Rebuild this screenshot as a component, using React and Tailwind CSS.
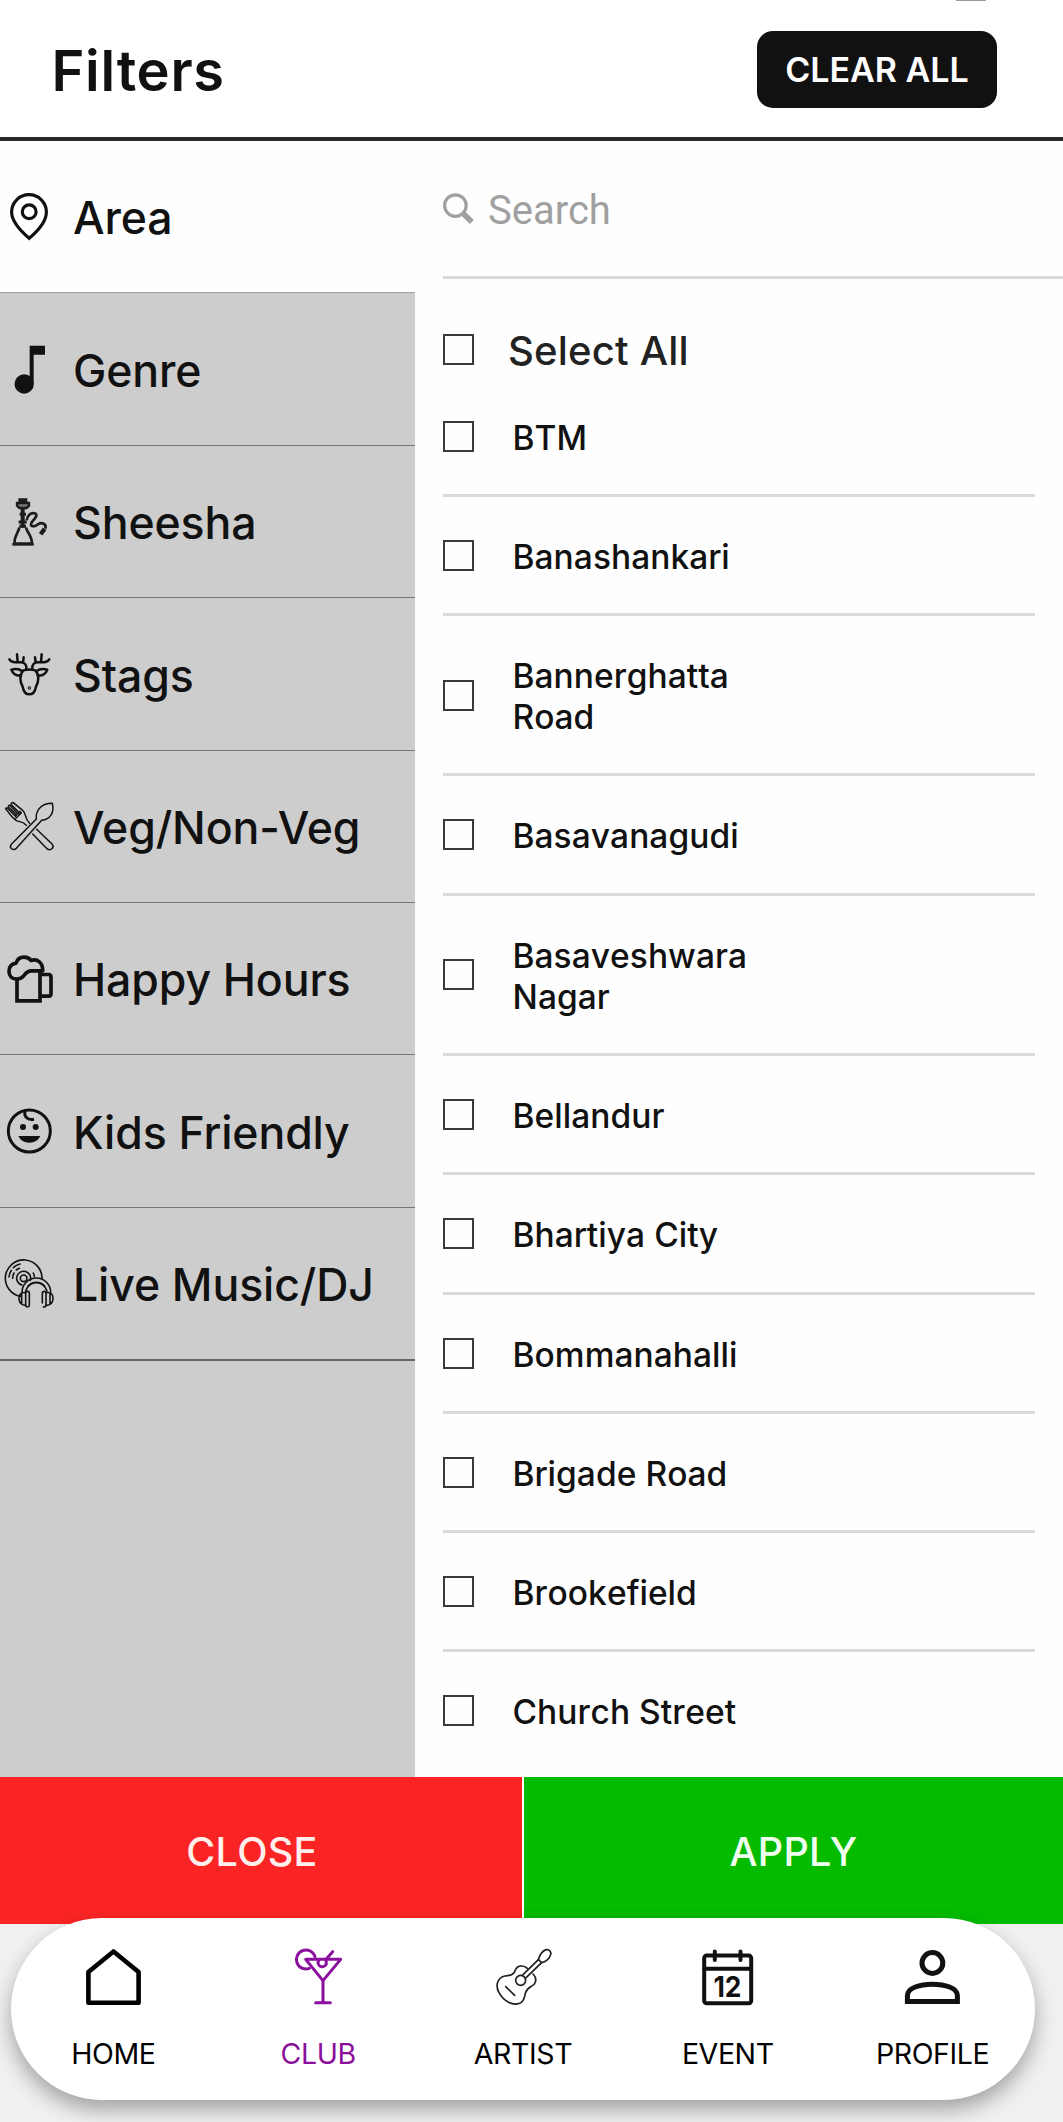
const categories = [
  { label: 'Area', Icon: PinIcon, active: true },
  { label: 'Genre', Icon: NoteIcon },
  { label: 'Sheesha', Icon: HookahIcon },
  { label: 'Stags', Icon: StagIcon },
  { label: 'Veg/Non-Veg', Icon: CutleryIcon },
  { label: 'Happy Hours', Icon: BeerIcon },
  { label: 'Kids Friendly', Icon: BabyIcon },
  { label: 'Live Music/DJ', Icon: DiscIcon },
];

const areas = [
  'BTM',
  'Banashankari',
  'Bannerghatta Road',
  'Basavanagudi',
  'Basaveshwara Nagar',
  'Bellandur',
  'Bhartiya City',
  'Bommanahalli',
  'Brigade Road',
  'Brookefield',
  'Church Street',
];

const tabs = [
  { label: 'HOME', Icon: HomeIcon },
  { label: 'CLUB', Icon: CocktailIcon, active: true },
  { label: 'ARTIST', Icon: GuitarIcon },
  { label: 'EVENT', Icon: CalendarIcon },
  { label: 'PROFILE', Icon: ProfileIcon },
];

const side = 'h-12 w-12 shrink-0 overflow-visible';
const nav = 'h-14 w-14 overflow-visible';

function PinIcon() {
  return (
    <svg viewBox="0 0 48 48" className={side} fill="none" stroke="currentColor" strokeWidth="3.2">
      <path d="M24.2 45.3C14.5 37 6.6 28.5 6.6 19a17.4 17.3 0 0 1 34.8 0C41.4 28.5 34 37 24.2 45.3Z" />
      <circle cx="24.2" cy="18.7" r="6.9" />
    </svg>
  );
}

function NoteIcon() {
  return (
    <svg viewBox="14 163 144 144" className={side} fill="currentColor">
      <path d="M88 165H134V192H100V280H88Z" />
      <circle cx="71.5" cy="280" r="29" />
    </svg>
  );
}

function HookahIcon() {
  return (
    <svg viewBox="14 52 144 144" className="h-12 w-12 shrink-0 overflow-visible text-[#1c1c1c] blur-[0.7px]" fill="none" stroke="currentColor" strokeWidth="8">
      <path d="M56 58H79V68H56Z" fill="currentColor" strokeWidth="4" />
      <path d="M50 70H86V78L79 85H57L50 78Z" fill="#777" strokeWidth="7" />
      <path d="M67 86V144" strokeWidth="12" />
      <path d="M58 104H77M55 127H79M57 140H77" strokeWidth="9" />
      <path d="M57 143C56 156 42 166 42 192H95C95 166 78 156 77 143" />
      <path d="M36 194H100" strokeWidth="8" />
      <path d="M79 122C81 106 92 98 103 101C117 106 99 120 93 130C88 144 105 141 113 134C124 126 140 133 135 147" strokeWidth="8" />
      <path d="M133 147L121 164" strokeWidth="13" />
    </svg>
  );
}

function StagIcon() {
  return (
    <svg viewBox="15 150 144 144" className={side} fill="none" stroke="currentColor" strokeWidth="7.5" strokeLinecap="round" strokeLinejoin="round">
      <g>
        <path d="M79 206C80 194 74 187 62 187C48 187 33 189 28 178" />
        <path d="M53 186L51 163M69 187L71 172" />
        <path d="M66 213C56 205 46 206 34 209C38 222 50 228 61 226" />
      </g>
      <g transform="translate(176 0) scale(-1 1)">
        <path d="M79 206C80 194 74 187 62 187C48 187 33 189 28 178" />
        <path d="M53 186L51 163M69 187L71 172" />
        <path d="M66 213C56 205 46 206 34 209C38 222 50 228 61 226" />
      </g>
      <path d="M70 211Q88 206 106 211C118 224 117 244 108 260C105 277 98 283 88 283C78 283 71 277 68 260C59 244 58 224 70 211Z" />
      <circle cx="88" cy="264" r="1.5" />
    </svg>
  );
}

function CutleryIcon() {
  return (
    <svg viewBox="15 609 144 144" className={side} fill="none" stroke="currentColor" strokeWidth="4.4" strokeLinecap="round" strokeLinejoin="round">
      <path d="M109 660C106 638 120 613 157 613C164 642 150 661 125 664L49 748C39 757 26 746 34 736Z" />
      <path d="M18 630C28 644 36 656 48 664C58 670 68 666 79 679" />
      <path d="M40 611L68 634C80 646 72 656 89 673" />
      <path d="M18 630Q16 626 22 627L46 652L50 648L25 623Q25 617 31 620L54 645L58 641L33 616Q34 609 40 611M60 637L64 642L46 659" />
      <path d="M98 705L141 749C152 757 164 746 157 736L110 691" />
    </svg>
  );
}

function BeerIcon() {
  return (
    <svg viewBox="15 163.5 144 144" className={side} fill="none" stroke="currentColor" strokeWidth="11" strokeLinejoin="round">
      <path d="M51 236V301H120V214" strokeLinejoin="miter" />
      <path d="M51 236C36 236 27 226 27 212C27 198 36 190 48 188C52 175 62 170 72 170C82 170 89 174 93 180C112 174 129 186 128 211H93C80 211 76 221 68 229C62 235 57 236 51 236Z" />
      <path d="M120 222H146Q153 222 153 230V279Q153 287 146 287H120" />
    </svg>
  );
}

function BabyIcon() {
  return (
    <svg viewBox="15 622 144 144" className={side} fill="none" stroke="currentColor" strokeWidth="9">
      <circle cx="88" cy="694" r="63" />
      <path d="M76 632C70 650 82 663 102 659" />
      <g fill="currentColor" stroke="none">
        <circle cx="69" cy="682" r="9" />
        <circle cx="107" cy="682" r="9" />
        <path d="M55 709H121Q112 729 88 729Q64 729 55 709Z" />
      </g>
    </svg>
  );
}

function DiscIcon() {
  return (
    <svg viewBox="15 28 144 144" className={side} fill="none" stroke="currentColor" strokeWidth="4.8" strokeLinecap="round">
      <path d="M126 88A55 55 0 1 0 62 140" />
      <path d="M91 92A21 21 0 1 0 66 106" />
      <circle cx="71" cy="86" r="10" />
      <path d="M27 82A44 44 0 0 1 34 62M40 54A44 44 0 0 1 60 43M38 86A33 33 0 0 1 42 70M49 61A33 33 0 0 1 58 56M103 80A33 33 0 0 0 100 70" />
      <path d="M66 128A43 43 0 0 1 152 128M77 124A33 33 0 0 1 141 124M84 109A33 33 0 0 1 134 109" />
      <rect x="77" y="125" width="11" height="47" rx="5" />
      <path d="M127 160V131Q127 125 133 125Q138 125 138 131V166Q138 172 130 172" />
      <path d="M77 129C61 126 56 138 57 148C58 160 66 167 77 167M65 132V163M139 129C155 126 160 138 159 148C158 160 150 167 139 167M150 132V163" />
    </svg>
  );
}

function SearchIcon() {
  return (
    <svg viewBox="0 0 31 31" className="h-[31px] w-[31px] shrink-0" fill="none" stroke="currentColor">
      <circle cx="12.4" cy="12.6" r="10.8" strokeWidth="3.2" />
      <path d="M20.5 20.7L28.8 29" strokeWidth="5.6" />
    </svg>
  );
}

function HomeIcon() {
  return (
    <svg viewBox="0 0 56 56" className={nav} fill="none" stroke="currentColor" strokeWidth="4.6" strokeLinejoin="round">
      <path d="M28.5 2.5L53.6 23V53.8H3.4V23Z" />
    </svg>
  );
}

function CocktailIcon() {
  return (
    <svg viewBox="33 27 168 168" className={nav} fill="none" stroke="currentColor" strokeWidth="9" strokeLinecap="round" strokeLinejoin="round">
      <path d="M108 50A28.5 28.5 0 1 0 91 85" />
      <path d="M80 58H185L132 122Z" />
      <path d="M132 122V187M110 188H154" />
      <path d="M120 60A12.5 12.5 0 1 0 142 66L140 59L161 35" />
    </svg>
  );
}

function GuitarIcon() {
  return (
    <svg viewBox="16 57 168 168" className={nav} fill="none" stroke="#1f1f1f" strokeWidth="5" strokeLinecap="round" strokeLinejoin="round">
      <path d="M114 116C102 104 84 106 78 118C74 132 66 136 46 138C24 142 16 166 28 188C42 214 70 228 90 220C104 214 104 202 107 190C112 172 124 172 134 162C142 150 138 140 130 132" />
      <circle cx="93" cy="151" r="15" />
      <path d="M98 136L146 89M107 145L156 98" />
      <path d="M146 89C150 74 160 62 170 59C180 58 185 66 183 74C180 86 168 96 156 98Z" />
      <path d="M48 170L75 196" />
    </svg>
  );
}

function CalendarIcon() {
  return (
    <svg viewBox="0 0 56 56" className={nav} fill="none" stroke="#111" strokeWidth="4" strokeLinecap="round">
      <rect x="4.2" y="6.6" width="47" height="47.6" rx="2.5" />
      <path d="M4.2 19.8H51.2M14.8 2.4V11M40.5 2.4V11" />
      <text x="13.5" y="47.8" textLength="28" lengthAdjust="spacingAndGlyphs" className="font-['Inter'] text-[29px] font-bold" fill="#111" stroke="none">12</text>
    </svg>
  );
}

function ProfileIcon() {
  return (
    <svg viewBox="0 0 56 56" className={nav} fill="none" stroke="#111" strokeWidth="5">
      <circle cx="27.4" cy="14" r="10.4" />
      <path d="M2.4 52.5V46.5C2.4 39 15 35.2 27.4 35.2S52.4 39 52.4 46.5V52.5Z" />
    </svg>
  );
}

function Checkbox() {
  return <span className="h-[31px] w-[31px] shrink-0 border-2 border-[#3a3a3a]" />;
}

export default function App() {
  return (
    <div className="relative flex h-[2122px] w-[1063px] flex-col overflow-hidden bg-[#f0f0f0] font-['Inter',sans-serif] text-[#111]">
      <div className="absolute left-[956px] top-0 h-px w-[30px] rounded-b-full bg-[#999]" />

      <header className="flex h-[141px] shrink-0 items-center justify-between border-b-4 border-[#2a2a2a] bg-white pt-px pr-[66px] pl-[51.5px]">
        <h1 className="mt-1 text-[56px] leading-none font-semibold tracking-[0.7px]">Filters</h1>
        <button className="flex h-[77px] w-[240px] items-center justify-center rounded-2xl bg-[#111] pt-0.5 text-[34px] leading-none font-semibold text-white">
          CLEAR ALL
        </button>
      </header>

      <main className="flex h-[1636px] shrink-0 bg-[#fefefe]">
        <aside className="w-[415px] shrink-0 bg-[#cdcdcd]">
          {categories.map(({ label, Icon, active }, i) => (
            <div
              key={label}
              className={
                active
                  ? 'flex h-[152.4px] items-center border-b border-[#a0a0a0] bg-[#fefefe] pl-[5px]'
                  : i === categories.length - 1
                    ? 'flex h-[153px] items-center border-b-2 border-[#666] pl-[5px]'
                    : 'flex h-[152.4px] items-center border-b border-[#777] pl-[5px]'
              }
            >
              <Icon />
              <span className="mt-1 ml-5 text-[44.6px] leading-none font-[470] tracking-[-0.1px] whitespace-nowrap">{label}</span>
            </div>
          ))}
        </aside>

        <section className="flex-1 pl-7">
          <div className="flex h-[138px] items-center border-b-[3px] border-[#dadada] text-[#a0a0a0]">
            <SearchIcon />
            <span className="mt-[5px] ml-3.5 font-['Roboto',sans-serif] text-[40px] leading-none">Search</span>
          </div>

          <div className="flex h-[98.5px] items-end pb-[13px]">
            <Checkbox />
            <span className="ml-[34px] pb-[-2px] text-[40px] leading-[29px] font-[460] tracking-[0.2px] text-[#222]">Select All</span>
          </div>

          <div className="mr-[28.5px]">
            {areas.map((area) => (
              <div key={area} className="flex items-center border-b-[3px] border-[#dadada] pt-[38px] pb-[37.3px] last:border-b-0">
                <Checkbox />
                <span className="mt-0.5 -mb-0.5 ml-[38.5px] w-[240px] text-[33.5px] leading-[41px] font-[450] tracking-[0.05px] [font-kerning:none]">{area}</span>
              </div>
            ))}
          </div>
        </section>
      </main>

      <div className="flex h-[147px] shrink-0 gap-0.5 bg-white text-[39.5px] leading-none font-[450]">
        <button className="flex w-[522px] items-center justify-center bg-[#fb2424] pt-1 pr-[18px] tracking-[0.3px] text-[#fff0ee]">CLOSE</button>
        <button className="flex flex-1 items-center justify-center bg-[#04bb00] pt-1 tracking-[0.3px] text-[#f0fff0]">APPLY</button>
      </div>

      <nav className="relative -mt-1.5 mr-7 ml-[11px] grid h-[182px] shrink-0 grid-cols-5 rounded-full bg-white shadow-[0_10px_20px_rgba(0,0,0,0.32)]">
        {tabs.map(({ label, Icon, active }) => (
          <div
            key={label}
            className={
              active
                ? 'flex flex-col items-center pt-[31px] text-[#8a0f9c]'
                : 'flex flex-col items-center pt-[31px] text-black'
            }
          >
            <Icon />
            <span className="mt-[34px] text-[28.5px] leading-[29px] font-[440] tracking-[-0.4px]">{label}</span>
          </div>
        ))}
      </nav>
    </div>
  );
}
